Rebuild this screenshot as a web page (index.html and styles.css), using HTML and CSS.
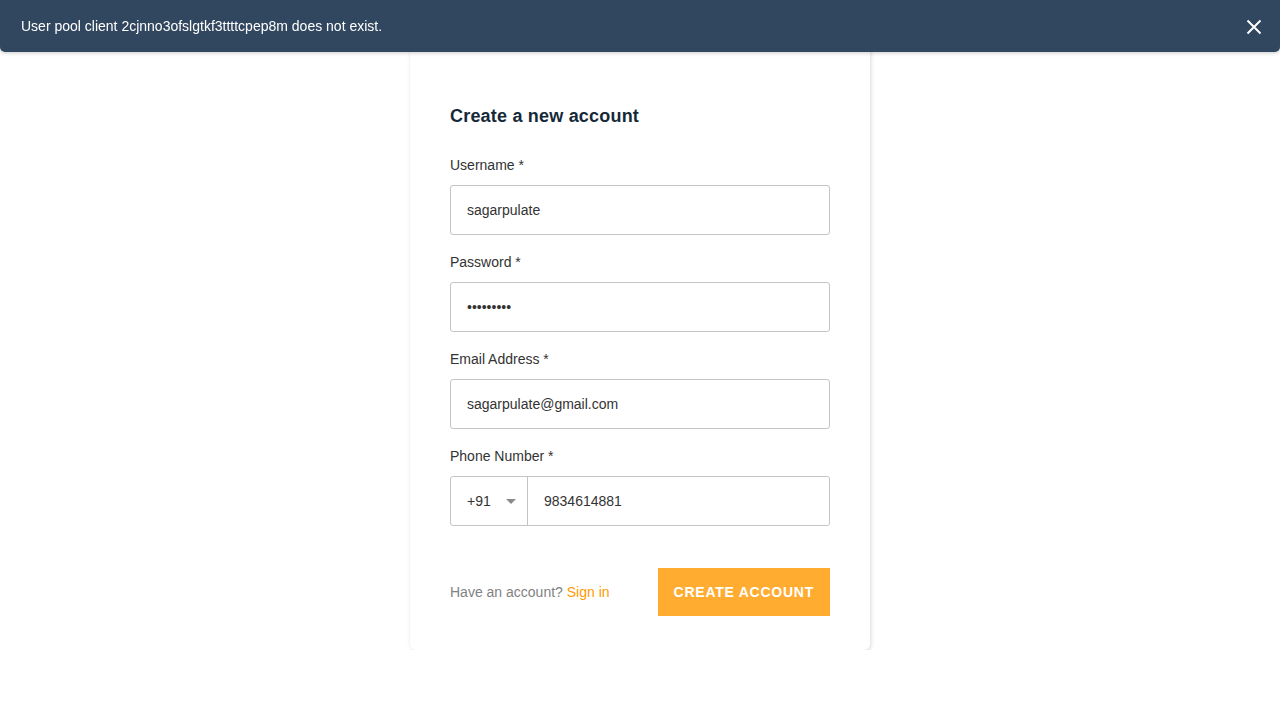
FILE: index.html
```html
<!DOCTYPE html>
<html lang="en">
<head>
<meta charset="utf-8">
<title>Create a new account</title>
<link rel="stylesheet" href="styles.css">
</head>
<body>
<div class="toast">
  <span class="toast-text">User pool client 2cjnno3ofslgtkf3ttttcpep8m does not exist.</span>
  <button class="toast-close" aria-label="Close">
    <svg width="16" height="16" viewBox="0 0 16 16"><path d="M1.5 1.5 L14.5 14.5 M14.5 1.5 L1.5 14.5" stroke="#fff" stroke-width="2" fill="none"/></svg>
  </button>
</div>
<main class="page">
  <section class="card">
    <h1 class="title">Create a new account</h1>
    <div class="field">
      <label class="label">Username *</label>
      <input class="input" type="text" value="sagarpulate">
    </div>
    <div class="field">
      <label class="label">Password *</label>
      <input class="input" type="password" value="abcdefghi">
    </div>
    <div class="field">
      <label class="label">Email Address *</label>
      <input class="input" type="email" value="sagarpulate@gmail.com">
    </div>
    <div class="field">
      <label class="label">Phone Number *</label>
      <div class="phone">
        <div class="dial">
          <select class="dial-select"><option>+91</option></select>
          <svg class="caret" width="10" height="5" viewBox="0 0 10 5"><path d="M0 0 L10 0 L5 5 Z" fill="#8a8a8a"/></svg>
        </div>
        <input class="input phone-input" type="tel" value="9834614881">
      </div>
    </div>
    <div class="footer">
      <span class="have">Have an account? <a class="link" href="#">Sign in</a></span>
      <button class="primary">CREATE ACCOUNT</button>
    </div>
  </section>
</main>
</body>
</html>
```
FILE: styles.css
```css
* { box-sizing: border-box; }
html, body { margin: 0; padding: 0; background: #fff; }
body {
  font-family: "Liberation Sans", Arial, sans-serif;
  color: #333;
  font-size: 14px;
}
.toast {
  position: fixed;
  top: 0;
  left: 0;
  right: 0;
  height: 52px;
  z-index: 10;
  display: flex;
  align-items: center;
  justify-content: space-between;
  padding: 0 18px 0 21px;
  background: #31465f;
  color: #fff;
  font-size: 14px;
  border-radius: 0 0 5px 5px;
  box-shadow: 0 0 5px 0 rgba(0, 0, 0, 0.3);
}
.toast-close {
  background: none;
  border: 0;
  padding: 0;
  width: 16px;
  height: 16px;
  margin-top: 2px;
  display: flex;
}
.page {
  padding-top: 14px;
}
.card {
  width: 460px;
  margin: 0 auto;
  padding: 90px 40px 34px;
  background: #fff;
  border-radius: 6px;
  box-shadow: 1px 1px 4px 0 rgba(0, 0, 0, 0.15);
}
.title {
  margin: 0 0 29px;
  font-size: 18px;
  line-height: 24px;
  font-weight: 700;
  color: #152939;
  letter-spacing: 0.2px;
}
.field { margin-bottom: 19px; }
.label {
  display: block;
  line-height: 17px;
  margin-bottom: 11px;
  color: #333;
  font-size: 14px;
}
.input {
  display: block;
  width: 100%;
  height: 50px;
  padding: 0 16px;
  border: 1px solid #c4c4c4;
  border-radius: 3px;
  font-family: "Liberation Sans", Arial, sans-serif;
  font-size: 14px;
  color: #333;
  background: #fff;
  outline: none;
}
.phone {
  display: flex;
  height: 50px;
  border: 1px solid #c4c4c4;
  border-radius: 3px;
}
.dial {
  position: relative;
  width: 77px;
  border-right: 1px solid #c4c4c4;
}
.dial-select {
  appearance: none;
  -webkit-appearance: none;
  width: 100%;
  height: 100%;
  border: 0;
  background: transparent;
  padding: 0 0 0 16px;
  font-family: "Liberation Sans", Arial, sans-serif;
  font-size: 14px;
  color: #333;
  outline: none;
}
.caret {
  position: absolute;
  left: 55px;
  top: 22px;
  pointer-events: none;
}
.phone-input {
  flex: 1;
  height: 48px;
  border: 0;
  border-radius: 0 3px 3px 0;
}
.footer {
  display: flex;
  align-items: center;
  justify-content: space-between;
  margin-top: 42px;
}
.have {
  color: #828282;
  font-size: 14px;
}
.link {
  color: #ff9900;
  text-decoration: none;
}
.primary {
  height: 48px;
  padding: 0 16px;
  border: 0;
  background: #ffac31;
  color: #fff;
  font-family: "Liberation Sans", Arial, sans-serif;
  font-size: 14px;
  font-weight: 700;
  letter-spacing: 0.75px;
}
```
